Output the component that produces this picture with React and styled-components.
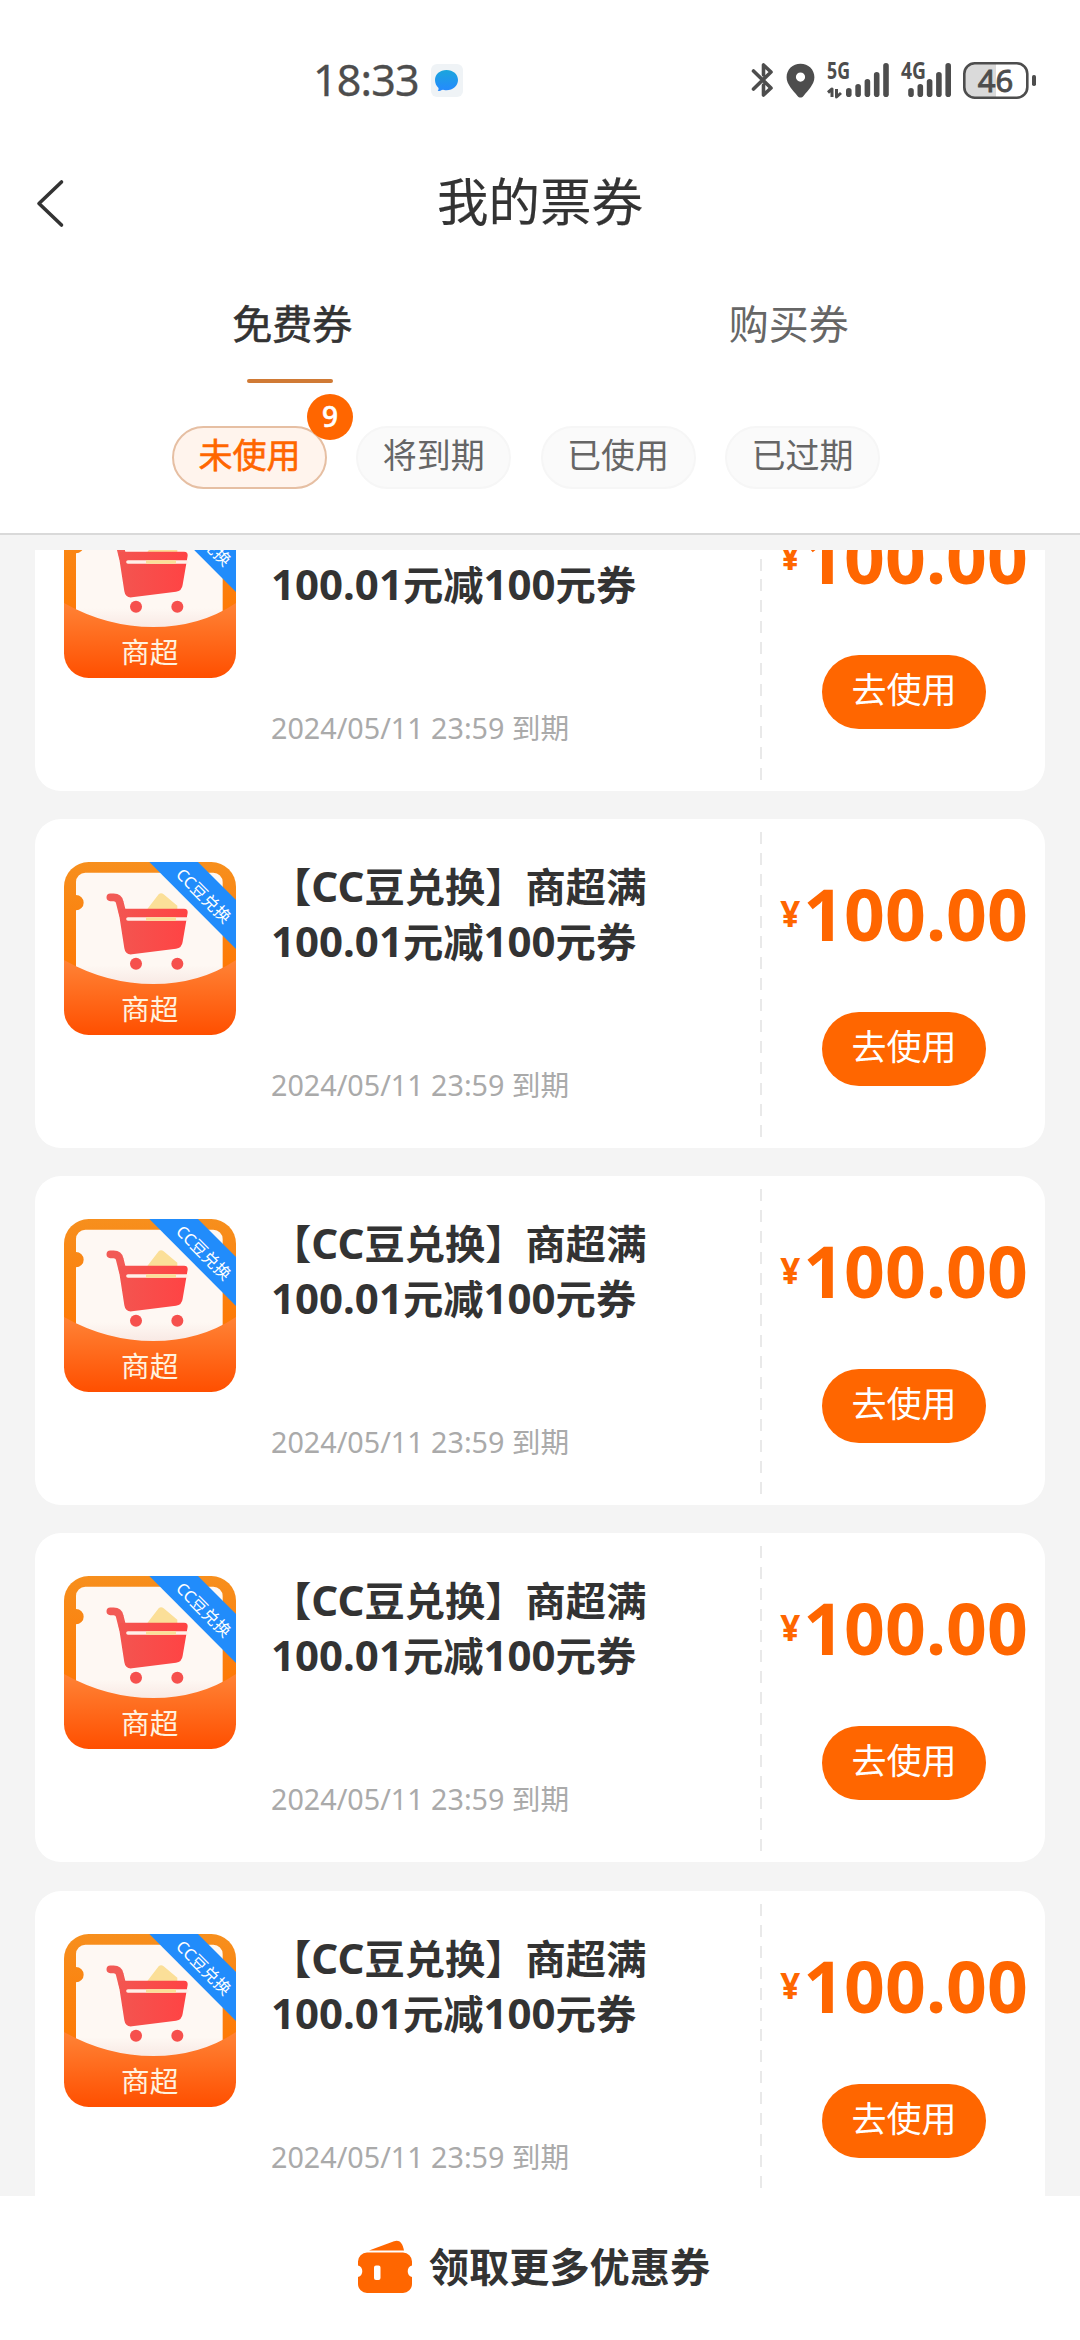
import React from "react";
import styled, { createGlobalStyle } from "styled-components";

const ORANGE = "#ff6600";
const INK = "#333333";
const STATUS_INK = "#4d4d4d";
const FONT = '"Noto Sans", "Noto Sans CJK SC", sans-serif';

const GlobalStyle = createGlobalStyle`
  * { box-sizing: border-box; }
  body {
    margin: 0;
    background: #fff;
    font-family: ${FONT};
    color: ${INK};
  }
  button { font-family: inherit; border: 0; padding: 0; background: none; color: inherit; }
`;

const Screen = styled.div`
  width: 1080px;
  height: 2340px;
  display: flex;
  flex-direction: column;
  overflow: hidden;
  background: #fff;
`;

/* ---------- status bar ---------- */

const StatusBar = styled.div`
  height: 120px;
  padding: 42px 43px 0 313px;
  display: flex;
  justify-content: space-between;
`;

const StatusGroup = styled.div`
  height: 80px;
  margin-top: -2px;
  display: flex;
  align-items: center;
  gap: ${(p) => p.$gap || 0}px;
`;

const Clock = styled.span`
  font-size: 43px;
  line-height: 80px;
  font-weight: 400;
  letter-spacing: -0.8px;
  color: ${STATUS_INK};
  -webkit-text-stroke: 0.3px ${STATUS_INK};
`;

const StatusSvg = styled.svg`
  display: block;
  flex: none;
  overflow: visible;
  font-family: ${FONT};
`;

/* ---------- header ---------- */

const Header = styled.header`
  height: 162px;
  display: grid;
  grid-template-columns: 100px 1fr 100px;
  align-items: center;
  padding-bottom: 1px;
`;

const BackButton = styled.button`
  padding-left: 35px;
  display: flex;
  margin-top: 4px;
`;

const Title = styled.h1`
  margin: 0;
  text-align: center;
  font-size: 51.5px;
  line-height: 70px;
  font-weight: 400;
  -webkit-text-stroke: 0.2px ${INK};
`;

const Tabs = styled.nav`
  height: 101px;
  padding: 0 43px 0 44px;
  display: grid;
  grid-template-columns: 1fr 1fr;
`;

const Tab = styled.button`
  display: flex;
  flex-direction: column;
  align-items: center;
  justify-content: space-between;
  padding-top: 12px;
  font-size: 40px;
  line-height: 60px;
  font-weight: 400;
  color: ${(p) => (p.$active ? INK : "#666")};
  -webkit-text-stroke: ${(p) => (p.$active ? "0.6px" : "0")};
`;

const TabLine = styled.span`
  width: 86px;
  height: 4px;
  margin-right: 5px;
  border-radius: 2px;
  background: #d07a35;
`;

const Filters = styled.div`
  height: 152px;
  padding: 43px 0 0 172px;
  display: flex;
  gap: 29.3px;
  border-bottom: 2px solid #d9d9d9;
`;

const Pill = styled.button`
  position: relative;
  width: 155px;
  height: 63px;
  border: 2px solid ${(p) => (p.$active ? "#e6bfa3" : "#f6f6f6")};
  border-radius: 32px;
  background: ${(p) => (p.$active ? "#fff4ed" : "#fafafa")};
  color: ${(p) => (p.$active ? ORANGE : "#666")};
  font-size: 34px;
  line-height: 54px;
  padding-bottom: 5px;
  font-weight: 400;
  -webkit-text-stroke: ${(p) => (p.$active ? "0.6px" : "0")};
`;

const Badge = styled.span`
  position: absolute;
  top: -34px;
  right: -28px;
  width: 46px;
  height: 46px;
  border-radius: 50%;
  background: ${ORANGE};
  color: #fff;
  font-size: 28px;
  line-height: 44px;
  font-weight: 500;
  text-align: center;
`;

/* ---------- coupon list ---------- */

const ListArea = styled.main`
  height: 1661px;
  padding: 15px 35px 0;
  background: #f4f4f4;
`;

const ListViewport = styled.div`
  height: 1646px;
  overflow: hidden;
`;

const CouponList = styled.div`
  display: flex;
  flex-direction: column;
  gap: 28.2px;
  margin-top: -88.2px;
`;

const Card = styled.article`
  height: 329px;
  flex: none;
  display: grid;
  grid-template-columns: 1fr 285px;
  background: #fff;
  border-radius: 26px;
`;

const CardMain = styled.div`
  display: flex;
  padding: 43px 0 0 29px;
  gap: 35px;
`;

const CardInfo = styled.div`
  flex: 1;
  height: 286px;
  padding-bottom: 43px;
  display: flex;
  flex-direction: column;
  justify-content: space-between;
`;

const CardTitle = styled.h2`
  margin: -3px 0 0;
  font-size: 40.3px;
  line-height: 55px;
  font-weight: 700;
  white-space: nowrap;
`;

const Latin = styled.span`
  font-size: 42px;
  line-height: 1;
`;

const Expiry = styled.p`
  margin: 0;
  font-size: 28.7px;
  line-height: 40px;
  color: #aaa;
  white-space: nowrap;
`;

const CardStub = styled.div`
  display: flex;
  flex-direction: column;
  align-items: center;
  padding: 47px 0 0 3px;
  background: repeating-linear-gradient(#e9e9e9 0 12px, transparent 12px 20.9px) 0 13px / 2px 305px no-repeat;
`;

const Price = styled.div`
  height: 96px;
  display: flex;
  align-items: center;
  gap: 3px;
  color: ${ORANGE};
  font-weight: 700;
`;

const Currency = styled.span`
  font-size: 35px;
  line-height: 96px;
`;

const Amount = styled.span`
  font-size: 71.5px;
  line-height: 96px;
`;

const UseButton = styled.button`
  margin-top: 50px;
  width: 164px;
  height: 74px;
  padding-bottom: 4px;
  border-radius: 37px;
  background: ${ORANGE};
  color: #fff;
  font-size: 35px;
  line-height: 70px;
`;

/* ---------- footer ---------- */

const Footer = styled.footer`
  height: 144px;
  padding: 0 13px 2px 0;
  display: flex;
  align-items: center;
  justify-content: center;
  gap: 16px;
  background: #fff;
`;

const FooterText = styled.span`
  font-size: 40.2px;
  line-height: 60px;
  font-weight: 700;
`;

/* ---------- drawings ---------- */

const ChatIcon = () => (
  <StatusSvg width="32" height="33" viewBox="0 0 32 33">
    <defs>
      <linearGradient id="chat" x1="0" y1="0" x2="0" y2="1">
        <stop offset="0" stopColor="#1ba5dc" />
        <stop offset="1" stopColor="#2589ff" />
      </linearGradient>
    </defs>
    <rect width="32" height="33" rx="6" fill="#eff3f6" />
    <path d="M15.500 6C22 6 27 10.300 27 16s-5 10.300-11.500 10.300c-1.800 0-3.300-.2-4.300-.5-1.200.8-2.600 1.400-4.500 1.300.7-.9 1-2 .8-3.200C5.300 22 4 19.300 4 16 4 10.300 9 6 15.500 6z" fill="url(#chat)" />
  </StatusSvg>
);

const BluetoothIcon = () => (
  <StatusSvg width="23" height="36" viewBox="0 0 23 36" fill="none" stroke={STATUS_INK} strokeWidth="3.600" strokeLinejoin="round" strokeLinecap="round">
    <path d="M2.500 9L20 26l-7.500 7V23M2.500 27L20 10l-7.500-7v10" />
  </StatusSvg>
);

const PinIcon = () => (
  <StatusSvg width="29" height="35" viewBox="0 0 29 35">
    <path fillRule="evenodd" fill={STATUS_INK} d="M14.500.7C6.700.7.600 6.500.600 14.200c0 7.200 6.400 13 10.900 18.700 1.700 2 4.300 2 6 0 4.500-5.700 10.900-11.500 10.900-18.700C28.400 6.500 22.300.7 14.500.7zm0 8.800a4.600 4.600 0 1 1 0 9.200 4.600 4.600 0 0 1 0-9.200z" />
  </StatusSvg>
);

const Bars = ({ x, heights }) =>
  heights.map((h, i) => (
    <rect key={i} x={x + i * 9.300} y={35 - h} width="5.600" height={h} rx="2.800" fill={STATUS_INK} />
  ));

const Signal5G = () => (
  <StatusSvg width="62" height="36" viewBox="0 0 62 36">
    <text x="0" y="17" fontSize="22.500" fontWeight="700" textLength="23" lengthAdjust="spacingAndGlyphs" fill={STATUS_INK}>5G</text>
    <path d="M1 30.500L5 27v8M9.500 27v8l4.500-4" fill="none" stroke={STATUS_INK} strokeWidth="3" strokeLinejoin="round" />
    <Bars x={19} heights={[9, 13, 18, 25, 34]} />
  </StatusSvg>
);

const Signal4G = () => (
  <StatusSvg width="50" height="36" viewBox="0 0 50 36">
    <text x="0" y="17" fontSize="22.500" fontWeight="700" textLength="25" lengthAdjust="spacingAndGlyphs" fill={STATUS_INK}>4G</text>
    <Bars x={7.200} heights={[9, 13, 18, 25, 34]} />
  </StatusSvg>
);

const BatteryIcon = () => (
  <StatusSvg width="74" height="37" viewBox="0 0 74 37">
    <path d="M12 1.500H33v34H12A10 10 0 0 1 1.500 25V12A10 10 0 0 1 12 1.500z" fill="#dadada" />
    <rect x="1.300" y="1.300" width="63" height="34.400" rx="10.500" fill="none" stroke={STATUS_INK} strokeWidth="2.600" />
    <rect x="69" y="13" width="4" height="11" rx="1.800" fill={STATUS_INK} />
    <text x="32.500" y="30" fontSize="31" textAnchor="middle" fill={STATUS_INK} stroke={STATUS_INK} strokeWidth="0.900">46</text>
  </StatusSvg>
);

const BackIcon = () => (
  <svg width="30" height="50" viewBox="0 0 30 50" fill="none" stroke={INK} strokeWidth="3.600" strokeLinecap="round" strokeLinejoin="round">
    <path d="M26.500 4L4 25.500 26.500 47" />
  </svg>
);

const MarketSvg = styled.svg`
  display: block;
  flex: none;
  width: 172px;
  height: 173px;
  font-family: ${FONT};
`;

const MarketIcon = () => (
  <MarketSvg viewBox="72 65 516 519">
    <defs>
      <clipPath id="tile"><rect x="72" y="65" width="516" height="519" rx="74" /></clipPath>
      <linearGradient id="back" x1="0" y1="0" x2="0" y2="1">
        <stop offset="0" stopColor="#f78f1d" />
        <stop offset="1" stopColor="#ff7400" />
      </linearGradient>
      <linearGradient id="pocket" x1="0" y1="0" x2="0" y2="1">
        <stop offset="0" stopColor="#ff8336" />
        <stop offset="1" stopColor="#ff4f00" />
      </linearGradient>
      <linearGradient id="cart" x1="0" y1="0.5" x2="1" y2="0.5">
        <stop offset="0" stopColor="#f35550" />
        <stop offset="1" stopColor="#ff4344" />
      </linearGradient>
      <linearGradient id="ticket" gradientUnits="userSpaceOnUse" x1="0" y1="375" x2="0" y2="436">
        <stop offset="0" stopColor="#fef8f3" />
        <stop offset="1" stopColor="#f8e8e3" />
      </linearGradient>
    </defs>
    <g clipPath="url(#tile)">
      <rect x="72" y="65" width="516" height="400" fill="url(#back)" />
      <path d="M136 97H520a28 28 0 0 1 28 28V450H108V210a23 23 0 0 0 0-46V125a28 28 0 0 1 28-28z" fill="url(#ticket)" />
      <path d="M322 206L356 162q7-7 15 0L412 196V206z" fill="#fbdf98" />
      <path d="M211 171h10q15 0 18 14l9 36" fill="none" stroke="#f25a55" strokeWidth="23" strokeLinecap="round" strokeLinejoin="round" />
      <path d="M240 205H432q12 0 11 12L428 304q-2 18-20 21L276 342q-20 2-23-18L236 214z" fill="url(#cart)" />
      <path d="M264 236H440" stroke="#fff0e8" strokeWidth="11" strokeLinecap="round" />
      <path d="M318 236H408" stroke="#fbdf98" strokeWidth="11" />
      <circle cx="288" cy="370" r="18" fill="#f6504d" />
      <circle cx="412" cy="370" r="18" fill="#f6504d" />
      <path d="M72 359Q200 431 340 431T588 359V584H72z" fill="url(#pocket)" />
      <text x="329" y="539" fontSize="86" textAnchor="middle" fill="#fff2df">商超</text>
    </g>
    <path d="M328 65H474L588 179V326z" fill="#218cfb" />
    <text transform="translate(491 166) rotate(45)" y="18" fontSize="49" textAnchor="middle" fill="#fff">CC豆兑换</text>
  </MarketSvg>
);

const TicketIcon = () => (
  <svg width="56" height="54" viewBox="0 0 56 54">
    <path d="M12 10.500L37 1.300c5-1.800 8.500 1 10 9.200z" fill={ORANGE} />
    <path fillRule="evenodd" d="M10 12.500H46a9 9 0 0 1 9 9V25.500a6 6 0 0 0 0 11.500V44a9 9 0 0 1-9 9H10a9 9 0 0 1-9-9V37a6 6 0 0 0 0-11.500V21.500a9 9 0 0 1 9-9zM19 25.500q-2 0-2 2V38q0 2 2 2h2.500q2 0 2-2V27.500q0-2-2-2z" fill={ORANGE} />
  </svg>
);

/* ---------- page ---------- */

const FILTERS = [
  { label: "未使用", count: 9 },
  { label: "将到期" },
  { label: "已使用" },
  { label: "已过期" },
];

const COUPONS = Array.from({ length: 5 }, (_, id) => ({
  id,
  expires: "2024/05/11 23:59 到期",
  amount: "100.00",
}));

const Coupon = ({ expires, amount }) => (
  <Card>
    <CardMain>
      <MarketIcon />
      <CardInfo>
        <CardTitle>
          【<Latin>CC</Latin>豆兑换】商超满
          <br />
          <Latin>100.01</Latin>元减<Latin>100</Latin>元券
        </CardTitle>
        <Expiry>{expires}</Expiry>
      </CardInfo>
    </CardMain>
    <CardStub>
      <Price>
        <Currency>¥</Currency>
        <Amount>{amount}</Amount>
      </Price>
      <UseButton>去使用</UseButton>
    </CardStub>
  </Card>
);

export default function App() {
  return (
    <Screen>
      <GlobalStyle />
      <StatusBar>
        <StatusGroup $gap={12}>
          <Clock>18:33</Clock>
          <ChatIcon />
        </StatusGroup>
        <StatusGroup $gap={12}>
          <BluetoothIcon />
          <PinIcon />
          <Signal5G />
          <Signal4G />
          <BatteryIcon />
        </StatusGroup>
      </StatusBar>
      <Header>
        <BackButton aria-label="返回">
          <BackIcon />
        </BackButton>
        <Title>我的票券</Title>
      </Header>
      <Tabs>
        <Tab $active>
          免费券
          <TabLine />
        </Tab>
        <Tab>购买券</Tab>
      </Tabs>
      <Filters>
        {FILTERS.map((f) => (
          <Pill key={f.label} $active={!!f.count}>
            {f.label}
            {f.count && <Badge>{f.count}</Badge>}
          </Pill>
        ))}
      </Filters>
      <ListArea>
        <ListViewport>
          <CouponList>
            {COUPONS.map((c) => (
              <Coupon key={c.id} {...c} />
            ))}
          </CouponList>
        </ListViewport>
      </ListArea>
      <Footer>
        <TicketIcon />
        <FooterText>领取更多优惠券</FooterText>
      </Footer>
    </Screen>
  );
}
